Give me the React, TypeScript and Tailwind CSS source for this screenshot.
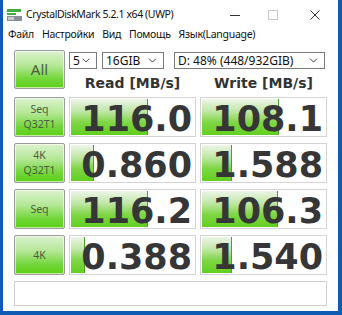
import { ChevronDown } from 'lucide-react';

type Row = { top: string; bottom?: string; read: string; write: string; rw: number; ww: number };

const rows: Row[] = [
  { top: 'Seq', bottom: 'Q32T1', read: '116.0', write: '108.1', rw: 77, ww: 77 },
  { top: '4K', bottom: 'Q32T1', read: '0.860', write: '1.588', rw: 23, ww: 30 },
  { top: 'Seq', read: '116.2', write: '106.3', rw: 77, ww: 76 },
  { top: '4K', read: '0.388', write: '1.540', rw: 14, ww: 30 },
];

const btn =
  'border border-[#9c9c9c] rounded-[2px] shadow-[inset_0_0_0_1px_rgba(255,255,255,0.6)] bg-[linear-gradient(to_bottom,#dcf2cf_0%,#b4e796_40%,#72d63a_75%,#5ccf16_100%)] text-[#4b5e3d] flex flex-col items-center justify-center leading-[15px]';

const Cell = ({ value, width }: { value: string; width: number }) => (
  <div className="relative border border-[#d4d4d4] bg-white h-full p-px">
    <div
      className="h-full border-r border-[#4e9e2c] bg-[linear-gradient(to_bottom,#edf5e8_0%,#bfe6a4_35%,#7fd646_65%,#62cf20_100%)]"
      style={{ width }}
    />
    <div className="absolute inset-0 flex items-center justify-end pr-[3px] pt-[4px] font-['DejaVu_Sans',sans-serif] font-bold text-[35px] text-[#363636]">
      {value}
    </div>
  </div>
);

const Select = ({ label, className }: { label: string; className: string }) => (
  <div className={`h-[17px] border border-[#7a7a7a] bg-white flex items-center justify-between pl-[3px] pr-[4px] text-[12px] text-[#111] ${className}`}>
    <span>{label}</span>
    <ChevronDown size={13} strokeWidth={1.6} className="text-[#222]" />
  </div>
);

export default function App() {
  return (
    <div className="w-[342px] h-[315px] bg-[#0f5bb3] pl-[3px] pr-[4px] overflow-hidden font-['Noto_Sans',sans-serif]">
      <div className="w-[335px] h-[311px] bg-white flex flex-col">
        {/* title bar */}
        <div className="h-[27px] flex items-center pl-[4px] pt-[3px] text-[10.5px] text-[#111]">
          <svg width="16" height="12" viewBox="0 0 16 12" className="mr-[3px]">
            <rect x="0" y="0" width="14" height="3" fill="#3fae3a" />
            <rect x="0" y="4" width="9" height="2" fill="#3fae3a" />
            <rect x="0" y="7" width="15" height="5" fill="#8a8f96" />
            <rect x="1" y="8" width="6" height="3" fill="#c7ccd2" />
          </svg>
          <span className="tracking-[-0.4px]">CrystalDiskMark 5.2.1 x64 (UWP)</span>
          <div className="ml-auto flex items-center text-[#222]">
            <div className="w-[38px] flex justify-center">
              <div className="w-[10px] h-px bg-[#333]" />
            </div>
            <div className="w-[38px] flex justify-center">
              <div className="w-[10px] h-[10px] border border-[#c8c8c8]" />
            </div>
            <div className="w-[46px] flex justify-center">
              <svg width="10" height="10" viewBox="0 0 10 10">
                <path d="M0.5 0.5 L9.5 9.5 M9.5 0.5 L0.5 9.5" stroke="#333" strokeWidth="1" />
              </svg>
            </div>
          </div>
        </div>
        {/* menu */}
        <div className="h-[16px] flex items-center gap-[8px] pl-[5px] text-[10.5px] text-[#111] tracking-[-0.3px]">
          <span>Файл</span>
          <span>Настройки</span>
          <span>Вид</span>
          <span>Помощь</span>
          <span>Язык(Language)</span>
        </div>
        {/* main */}
        <div className="pl-[11px] pt-[7px] flex flex-col">
          <div className="grid grid-cols-[51px_127px_127px] gap-x-[4px]">
            <div className={`${btn} h-[39px] text-[15px]`}>All</div>
            <div className="col-span-2 flex flex-col">
              <div className="flex gap-[5px] pt-[2px]">
                <Select label="5" className="w-[28px]" />
                <Select label="16GIB" className="w-[62px] mr-[5px]" />
                <Select label="D: 48% (448/932GIB)" className="w-[151px]" />
              </div>
              <div className="grid grid-cols-2 gap-x-[4px] mt-[5px] font-['DejaVu_Sans',sans-serif] font-bold text-[14px] text-[#333] leading-[18px]">
                <div className="text-center">Read [MB/s]</div>
                <div className="text-center">Write [MB/s]</div>
              </div>
            </div>
          </div>
          <div className="flex flex-col gap-[6px] mt-[5px]">
            {rows.map((r, i) => (
              <div key={i} className="grid grid-cols-[51px_127px_127px] gap-x-[4px] h-[40px]">
                <div className={`${btn} text-[10.5px]`}>
                  <span>{r.top}</span>
                  {r.bottom && <span>{r.bottom}</span>}
                </div>
                <Cell value={r.read} width={r.rw} />
                <Cell value={r.write} width={r.ww} />
              </div>
            ))}
          </div>
          <div className="mt-[6px] w-[313px] h-[25px] border border-[#d0d0d0] bg-white" />
        </div>
      </div>
    </div>
  );
}
